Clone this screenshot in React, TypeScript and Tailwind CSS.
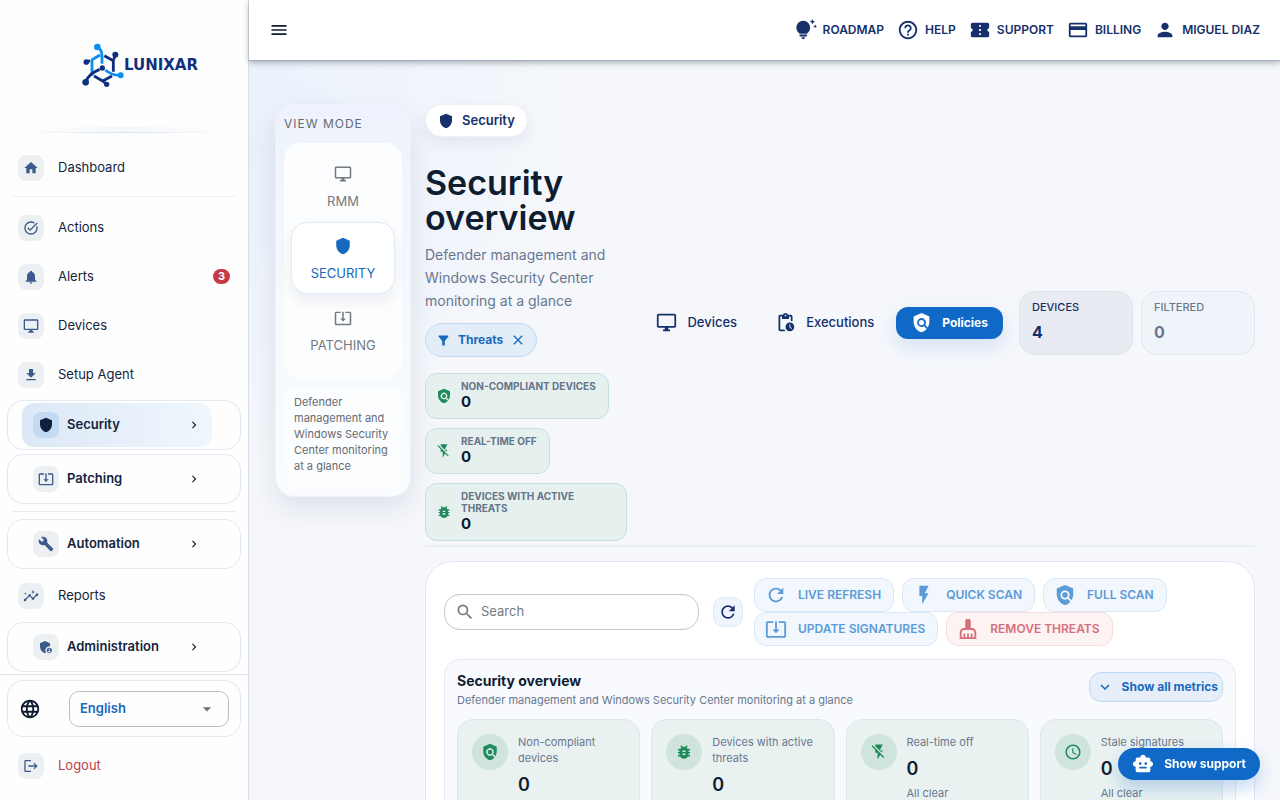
import type { ReactNode } from 'react';
import type { IconType } from 'react-icons';
import {
  MdAccessTime,
  MdAdminPanelSettings,
  MdArrowDropDown,
  MdBugReport,
  MdBuild,
  MdClose,
  MdConfirmationNumber,
  MdCreditCard,
  MdExpandMore,
  MdFilterAlt,
  MdFlashOff,
  MdFlashOn,
  MdGetApp,
  MdHelpOutline,
  MdHome,
  MdInsights,
  MdKeyboardArrowRight,
  MdLanguage,
  MdLogout,
  MdMenu,
  MdNotifications,
  MdOutlineDesktopWindows,
  MdPendingActions,
  MdPerson,
  MdPolicy,
  MdRefresh,
  MdSearch,
  MdShield,
  MdSmartToy,
  MdSystemUpdateAlt,
  MdTaskAlt,
  MdTipsAndUpdates,
} from 'react-icons/md';

function Logo() {
  return (
    <a href="#" aria-label="Lunixar" className="flex items-center">
      <svg viewBox="240 130 126 132" className="h-11 w-[42px] shrink-0" fill="none" strokeWidth="8.5" strokeLinejoin="round">
        <path
          d="M286 142 Q300 150 300 168 V192 M294 166 L270 180 V228 M310 211 Q328 227 354 227"
          stroke="#0c8ff2"
        />
        <path
          d="M307 168 L334 183 V216 M340 165 L334 183 M253 187 L264 183 M293 209 Q257 224 252 247 M276 229 L302 244 L330 229 M302 244 L313 253"
          stroke="#10307f"
        />
        <circle cx="286" cy="142" r="10" fill="#0c8ff2" />
        <circle cx="356" cy="227" r="9" fill="#0c8ff2" />
        <circle cx="340" cy="165" r="9" fill="#10307f" />
        <circle cx="253" cy="187" r="8.5" fill="#10307f" />
        <circle cx="251" cy="248" r="10" fill="#10307f" />
        <circle cx="314" cy="254" r="8" fill="#10307f" />
        <circle cx="301" cy="205" r="8" fill="#10307f" />
      </svg>
      <span className="font-['DejaVu_Sans',sans-serif] text-[15px] leading-4 font-bold text-[#10307f]">LUNIXAR</span>
    </a>
  );
}

// Broom with a solid handle
function BroomIcon({ size = 24 }: { size?: number | string }) {
  return (
    <svg width={size} height={size} viewBox="0 0 24 24" fill="currentColor">
      <path d="M16 11h-1V3c0-1.1-.9-2-2-2h-2c-1.1 0-2 .9-2 2v8H8c-2.76 0-5 2.24-5 5v7h18v-7c0-2.76-2.24-5-5-5zm3 10h-2v-3c0-.55-.45-1-1-1s-1 .45-1 1v3h-2v-3c0-.55-.45-1-1-1s-1 .45-1 1v3H9v-3c0-.55-.45-1-1-1s-1 .45-1 1v3H5v-5c0-1.65 1.35-3 3-3h8c1.65 0 3 1.35 3 3v5z" />
    </svg>
  );
}

function NavItem({ icon: Icon, label, badge, danger }: { icon: IconType; label: string; badge?: number; danger?: boolean }) {
  return (
    <a href="#" className="flex h-[49px] items-center px-[18px] text-[13px]">
      <span className="flex h-[26px] w-[26px] items-center justify-center rounded-lg bg-[#edf0f3] text-[#3c5a8c]">
        <Icon size={16} />
      </span>
      <span className={danger ? 'ml-[14px] text-[#bd3f4b]' : 'ml-[14px]'}>{label}</span>
      {badge && (
        <span className="ml-auto rounded-full bg-[#c53a47] px-[5px] text-[11px] leading-[15px] font-bold text-white">{badge}</span>
      )}
    </a>
  );
}

function NavGroup({ icon: Icon, label, active }: { icon: IconType; label: string; active?: boolean }) {
  return (
    <div className="mx-[7px] rounded-2xl border border-[#e3e9f0] px-[14px] py-[2px]">
      <button
        className={`flex h-11 w-[190px] items-center rounded-xl px-[11px] text-[13px] font-semibold ${
          active ? 'bg-linear-to-r from-[#dce8f6] to-[#f0f7fd]' : ''
        }`}
      >
        <span
          className={`flex h-[26px] w-[26px] items-center justify-center rounded-lg ${
            active ? 'bg-[#c3daf2] text-[#10203a]' : 'bg-[#edf0f3] text-[#3c5a8c]'
          }`}
        >
          <Icon size={16} />
        </span>
        <span className="ml-2">{label}</span>
        <MdKeyboardArrowRight size={14} className="ml-auto" />
      </button>
    </div>
  );
}

function Sidebar() {
  return (
    <aside className="flex h-full w-[249px] shrink-0 flex-col border-r border-[#d9dee6] bg-[#fefefe] text-[#13243d]">
      <div className="flex h-[127px] shrink-0 justify-center pt-[43px] pl-8">
        <div>
          <Logo />
        </div>
      </div>
      <div className="mx-5 shrink-0">
        <div className="h-[5px] bg-linear-to-r from-transparent via-[#f4f6f8] to-transparent" />
        <div className="h-px bg-linear-to-r from-transparent via-[#d3e2f1] to-transparent" />
      </div>
      <nav className="min-h-0 flex-1 overflow-hidden pt-[10px]">
        <NavItem icon={MdHome} label="Dashboard" />
        <hr className="mx-3 mt-1 mb-[6px] border-[#eef1f5]" />
        <NavItem icon={MdTaskAlt} label="Actions" />
        <NavItem icon={MdNotifications} label="Alerts" badge={3} />
        <NavItem icon={MdOutlineDesktopWindows} label="Devices" />
        <NavItem icon={MdGetApp} label="Setup Agent" />
        <div className="mt-px flex flex-col gap-1">
          <NavGroup icon={MdShield} label="Security" active />
          <NavGroup icon={MdSystemUpdateAlt} label="Patching" />
        </div>
        <hr className="mx-3 my-[7px] border-[#e9edf2]" />
        <NavGroup icon={MdBuild} label="Automation" />
        <div className="py-[2px]">
          <NavItem icon={MdInsights} label="Reports" />
        </div>
        <NavGroup icon={MdAdminPanelSettings} label="Administration" />
      </nav>
      <div className="h-[126px] shrink-0 border-t border-[#dfe3e8] pt-[5px]">
        <div className="mx-[7px] flex h-[57px] items-center rounded-2xl border border-[#e3e9f0] px-[11px]">
          <MdLanguage size={22} className="text-[#0e1b2e]" />
          <div className="relative ml-auto">
            <select
              aria-label="Language"
              className="h-9 w-[160px] appearance-none rounded-[10px] border border-[#b9bec6] px-[10px] text-[13px] font-semibold text-[#1769bd]"
            >
              <option>English</option>
            </select>
            <MdArrowDropDown size={20} className="pointer-events-none absolute top-2 right-3 text-[#6f7378]" />
          </div>
        </div>
        <div className="pt-1">
          <NavItem icon={MdLogout} label="Logout" danger />
        </div>
      </div>
    </aside>
  );
}

const topLinks: { icon: IconType; label: string }[] = [
  { icon: MdTipsAndUpdates, label: 'ROADMAP' },
  { icon: MdHelpOutline, label: 'HELP' },
  { icon: MdConfirmationNumber, label: 'SUPPORT' },
  { icon: MdCreditCard, label: 'BILLING' },
  { icon: MdPerson, label: 'MIGUEL DIAZ' },
];

function TopBar() {
  return (
    <header className="relative z-10 flex h-[60px] shrink-0 items-center justify-between bg-white px-5 text-[#15306b] shadow-[0_1px_1px_#a9adc6,0_3px_6px_rgba(70,80,90,0.4)]">
      <button aria-label="Menu" className="text-[#0e1b2e]">
        <MdMenu size={20} />
      </button>
      <nav className="flex items-center gap-[13px]">
        {topLinks.map(({ icon: Icon, label }) => (
          <a key={label} href="#" className="flex items-center gap-[6px] text-[12px] font-semibold">
            <Icon size={22} />
            {label}
          </a>
        ))}
      </nav>
    </header>
  );
}

function ModeButton({ icon: Icon, label, active }: { icon: IconType; label: string; active?: boolean }) {
  return (
    <button
      className={`flex h-[72px] w-full flex-col items-center justify-center gap-[9px] rounded-2xl pt-1 text-[13px] ${
        active ? 'border border-[#dfebf7] bg-white text-[#1769bd] shadow-[0_6px_14px_rgba(20,40,80,0.08)]' : 'text-[#75797f]'
      }`}
    >
      <Icon size={18} />
      {label}
    </button>
  );
}

function ViewMode() {
  return (
    <section className="w-[136px] shrink-0 rounded-[20px] border border-[#eef2f9] bg-linear-to-b from-[#edf2fc] via-[#f6f9fd] to-[#fafcfe] px-2 pb-2 shadow-[0_12px_28px_rgba(20,40,80,0.1)]">
      <h2 className="py-[11px] text-[12px] leading-4 tracking-[1px] text-[#666b73]">VIEW MODE</h2>
      <div className="rounded-2xl bg-[#fcfdfe] px-[7px] pt-[7px] pb-3">
        <ModeButton icon={MdOutlineDesktopWindows} label="RMM" />
        <ModeButton icon={MdShield} label="SECURITY" active />
        <ModeButton icon={MdSystemUpdateAlt} label="PATCHING" />
      </div>
      <p className="mt-2 rounded-2xl bg-[#fcfdfe] px-[10px] pt-2 pb-[14px] text-[11px] leading-4 text-[#666b73]">
        Defender management and Windows Security Center monitoring at a glance
      </p>
    </section>
  );
}

function AlertCard({ icon: Icon, label }: { icon: IconType; label: string }) {
  return (
    <div className="flex max-w-[202px] items-center gap-[9px] rounded-xl border border-[#c9e0d8] bg-[#e6f0ee] py-[6px] pr-3 pl-[10px]">
      <Icon size={16} className="shrink-0 text-[#1f8a5b]" />
      <div>
        <p className="text-[10px] leading-3 font-bold text-[#64748b]">{label}</p>
        <p className="text-[15px] leading-5 font-bold text-[#0b1a30]">0</p>
      </div>
    </div>
  );
}

function Hero() {
  return (
    <div className="flex items-center justify-between border-b-2 border-[#eaedf2] pb-1">
      <div className="flex w-[202px] shrink-0 flex-col items-start">
        <span className="flex h-[33px] items-center gap-2 rounded-full border border-[#edf1f7] bg-white px-3 text-[13px] font-semibold text-[#15306b] shadow-[0_6px_14px_rgba(20,40,80,0.07)]">
          <MdShield size={16} />
          Security
        </span>
        <h1 className="mt-7 text-[34px] leading-[35px] font-semibold text-[#0e1d30]">Security overview</h1>
        <p className="mt-2 text-[14px] leading-[23px] text-[#68778f]">
          Defender management and Windows Security Center monitoring at a glance
        </p>
        <span className="mt-[11px] flex h-[34px] items-center gap-[7px] rounded-full border border-[#c3dcf2] bg-[#e3edf8] px-[10px] text-[12px] font-bold text-[#1769bd]">
          <MdFilterAlt size={15} />
          Threats
          <button aria-label="Clear filter">
            <MdClose size={16} />
          </button>
        </span>
        <div className="mt-4 flex flex-col items-start gap-[9px]">
          <AlertCard icon={MdPolicy} label="NON-COMPLIANT DEVICES" />
          <AlertCard icon={MdFlashOff} label="REAL-TIME OFF" />
          <AlertCard icon={MdBugReport} label="DEVICES WITH ACTIVE THREATS" />
        </div>
      </div>
      <div className="flex items-center gap-4">
        <nav className="flex items-center gap-[6px] text-[13px] font-medium text-[#15306b]">
          <a href="#" className="flex h-8 items-center gap-[10px] px-4">
            <MdOutlineDesktopWindows size={21} />
            Devices
          </a>
          <a href="#" className="flex h-8 items-center gap-[10px] px-4">
            <MdPendingActions size={21} />
            Executions
          </a>
          <a
            href="#"
            className="flex h-8 items-center gap-[10px] rounded-xl bg-[#1169c7] px-[15px] text-[12px] font-bold text-white shadow-[0_8px_20px_rgba(17,105,199,0.15)]"
          >
            <MdPolicy size={21} />
            Policies
          </a>
        </nav>
        <div className="flex gap-2">
          <div className="h-16 w-[114px] rounded-2xl border border-[#dfe2ea] bg-[#e8ebf2] px-3 py-2 text-[#15306b]">
            <p className="text-[11px] leading-[14px] font-medium">DEVICES</p>
            <p className="mt-2 text-[16px] leading-5 font-bold">4</p>
          </div>
          <div className="h-16 w-[114px] rounded-2xl border border-[#dfe7f3] bg-[#eff4fb] px-3 py-2 text-[#68778f]">
            <p className="text-[11px] leading-[14px] font-medium">FILTERED</p>
            <p className="mt-2 text-[16px] leading-5 font-bold">0</p>
          </div>
        </div>
      </div>
    </div>
  );
}

interface ScanButtonProps {
  icon: (props: { size?: number | string }) => ReactNode;
  children: ReactNode;
  danger?: boolean;
}

function ScanButton({ icon: Icon, children, danger }: ScanButtonProps) {
  return (
    <button
      className={`flex h-[34px] items-center gap-[11px] rounded-xl border pr-3 pl-[10px] text-[12px] font-semibold ${
        danger ? 'border-[#f8dcde] bg-[#fdf3f3] text-[#d4707b]' : 'border-[#d9e9f7] bg-[#f1f7fc] text-[#5b9bd8]'
      }`}
    >
      <Icon size={22} />
      {children}
    </button>
  );
}

const metrics: { icon: IconType; label: string }[] = [
  { icon: MdPolicy, label: 'Non-compliant devices' },
  { icon: MdBugReport, label: 'Devices with active threats' },
  { icon: MdFlashOff, label: 'Real-time off' },
  { icon: MdAccessTime, label: 'Stale signatures' },
];

function Overview() {
  return (
    <section className="mt-[14px] rounded-[28px] border border-[#e2e7f3] bg-white px-[18px] py-4">
      <div className="flex items-center">
        <label className="flex h-9 w-[255px] items-center gap-[6px] rounded-2xl border border-[#c4c7cb] px-[10px]">
          <MdSearch size={20} className="text-[#75797f]" />
          <input
            type="text"
            aria-label="Search"
            placeholder="Search"
            className="min-w-0 flex-1 text-[13px] outline-none placeholder:text-[#75797f]"
          />
        </label>
        <button
          aria-label="Refresh"
          className="ml-[14px] flex h-[30px] w-[30px] shrink-0 items-center justify-center rounded-[10px] border border-[#e2e9f5] bg-[#f0f4fc] text-[#15306b]"
        >
          <MdRefresh size={20} />
        </button>
        <div className="ml-[11px] flex flex-1 flex-wrap gap-x-2">
          <ScanButton icon={MdRefresh}>LIVE REFRESH</ScanButton>
          <ScanButton icon={MdFlashOn}>QUICK SCAN</ScanButton>
          <ScanButton icon={MdPolicy}>FULL SCAN</ScanButton>
          <ScanButton icon={MdSystemUpdateAlt}>UPDATE SIGNATURES</ScanButton>
          <ScanButton icon={BroomIcon} danger>
            REMOVE THREATS
          </ScanButton>
        </div>
      </div>

      <div className="mt-[13px] rounded-2xl border border-[#e6eaf5] bg-[#f8fafd] px-3 pt-3 pb-4">
        <div className="flex items-start justify-between">
          <div>
            <h2 className="text-[14px] leading-[18px] font-bold text-[#0e1d30]">Security overview</h2>
            <p className="mt-[2px] text-[11px] leading-4 text-[#68778f]">
              Defender management and Windows Security Center monitoring at a glance
            </p>
          </div>
          <button className="flex h-[30px] items-center gap-2 rounded-xl border border-[#bfd9f2] bg-[#e6eff9] pr-1 pl-[6px] text-[12px] font-bold text-[#1769bd]">
            <MdExpandMore size={18} />
            Show all metrics
          </button>
        </div>
        <div className="mt-[11px] grid grid-cols-4 gap-[11px]">
          {metrics.map(({ icon: Icon, label }) => (
            <div key={label} className="flex items-start gap-[10px] rounded-2xl border border-[#dde6ee] bg-[#eaf2f1] p-[14px]">
              <span className="flex h-9 w-9 shrink-0 items-center justify-center rounded-full bg-[#cfe4dd] text-[#1f8a5b]">
                <Icon size={18} />
              </span>
              <div>
                <p className="text-[11px] leading-4 text-[#68778f]">{label}</p>
                <p className="mt-2 text-[18px] leading-[22px] font-semibold text-[#0e1d30]">0</p>
                <p className="mt-[5px] text-[11px] leading-4 text-[#68778f]">All clear</p>
              </div>
            </div>
          ))}
        </div>
      </div>
    </section>
  );
}

export default function App() {
  return (
    <div className="flex h-screen overflow-hidden bg-[#f5f7fb] font-['Inter',sans-serif]">
      <Sidebar />
      <div className="flex min-w-0 flex-1 flex-col">
        <TopBar />
        <main className="flex min-h-0 flex-1 items-start gap-[14px] overflow-hidden bg-[radial-gradient(circle_at_0_80px,#eaf1fc,#f5f7fb_320px)] pt-11 pr-[25px] pl-[26px]">
          <ViewMode />
          <div className="min-w-0 flex-1">
            <Hero />
            <Overview />
          </div>
        </main>
      </div>
      <button className="fixed right-5 bottom-5 flex h-8 items-center gap-[10px] rounded-2xl bg-[#1169c7] px-[14px] text-[12px] font-bold text-white shadow-[0_8px_18px_rgba(17,105,199,0.25)]">
        <MdSmartToy size={22} />
        Show support
      </button>
    </div>
  );
}
